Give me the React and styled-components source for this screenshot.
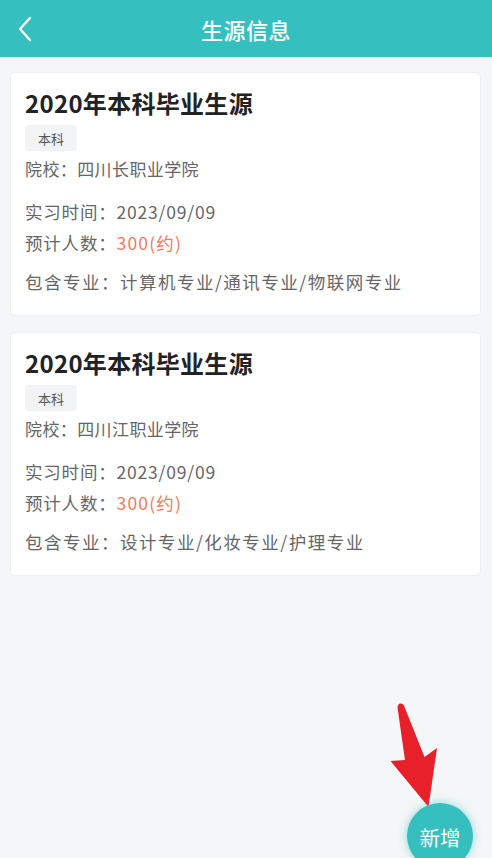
import React from "react";
import styled, { createGlobalStyle } from "styled-components";

const Global = createGlobalStyle`
  html, body { margin: 0; padding: 0; }
  body {
    background: #f4f6f8;
    font-family: "Noto Sans CJK SC", "Noto Sans", sans-serif;
    overflow: hidden;
  }
  * { box-sizing: border-box; }
`;

const Page = styled.div`
  position: relative;
  width: 492px;
  height: 858px;
  overflow: hidden;
  background: #f4f6f8;
`;

const Header = styled.header`
  height: 57px;
  background: #35bfbe;
  display: flex;
  align-items: center;
  justify-content: center;
  position: relative;
`;

const BackButton = styled.button`
  position: absolute;
  left: 10px;
  top: 0;
  height: 57px;
  width: 30px;
  border: 0;
  padding: 0;
  background: transparent;
  display: flex;
  align-items: center;
  justify-content: center;
`;

const Title = styled.h1`
  margin: 0;
  color: #fff;
  font-size: 22px;
  font-weight: 500;
  letter-spacing: 0.5px;
`;

const List = styled.main`
  display: flex;
  flex-direction: column;
  gap: 16px;
  padding: 15px 11px 0 10px;
`;

const Card = styled.section`
  background: #fff;
  border-radius: 5px;
  border: 1px solid #eceef0;
  padding: 14px 14px 20px 14px;
  display: flex;
  flex-direction: column;
  align-items: flex-start;
`;

const CardTitle = styled.h2`
  margin: 0;
  font-size: 24px;
  line-height: 32px;
  font-weight: 700;
  letter-spacing: 0.3px;
  color: #222;
`;

const Tag = styled.span`
  margin-top: 6px;
  height: 26px;
  padding: 0 13px;
  display: inline-flex;
  align-items: center;
  background: #f2f3f5;
  border-radius: 4px;
  font-size: 13px;
  color: #555;
`;

const School = styled.p`
  margin: 5px 0 0 0;
  font-size: 17px;
  letter-spacing: 0.4px;
  line-height: 26px;
  color: #666;
`;

const Line = styled.p`
  margin: ${(p) => p.$gap}px 0 0 0;
  font-size: 17.5px;
  letter-spacing: ${(p) => (p.$wide ? 1.5 : 0.8)}px;
  line-height: 26px;
  color: #666;
`;

const Highlight = styled.span`
  color: #f47b5a;
  letter-spacing: 1.2px;
`;

const Fab = styled.button`
  position: absolute;
  left: 407px;
  bottom: -11px;
  width: 66px;
  height: 66px;
  border-radius: 50%;
  border: 0;
  background: #35bfbe;
  box-shadow: 0 0 8px rgba(53, 191, 190, 0.55);
  color: #fff;
  font-family: "Noto Sans CJK SC", sans-serif;
  font-size: 20.5px;
  padding: 2px 0 0 0;
  display: flex;
  align-items: center;
  justify-content: center;
`;

const Pointer = styled.svg`
  position: absolute;
  left: 385px;
  top: 700px;
  width: 60px;
  height: 112px;
  overflow: visible;
`;

const data = [
  { school: "四川长职业学院", majors: "计算机专业/通讯专业/物联网专业" },
  { school: "四川江职业学院", majors: "设计专业/化妆专业/护理专业" },
];

export default function App() {
  return (
    <Page>
      <Global />
      <Header>
        <BackButton aria-label="返回">
          <svg width="14" height="26" viewBox="0 0 14 26">
            <path d="M12 2 L2 13 L12 24" fill="none" stroke="#fff" strokeWidth="2.4" strokeLinecap="round" strokeLinejoin="round" />
          </svg>
        </BackButton>
        <Title>生源信息</Title>
      </Header>
      <List>
        {data.map((d, i) => (
          <Card key={i}>
            <CardTitle>2020年本科毕业生源</CardTitle>
            <Tag>本科</Tag>
            <School>院校：{d.school}</School>
            <Line $gap={17}>实习时间：2023/09/09</Line>
            <Line $gap={5}>
              预计人数：<Highlight>300(约)</Highlight>
            </Line>
            <Line $gap={13} $wide>包含专业：{d.majors}</Line>
          </Card>
        ))}
      </List>
      <Pointer viewBox="385 700 60 112">
        <path
          d="M397.5 707.5 Q398 703 401 703.5 Q404 704 404.5 707 L424.5 757 L437 748 L428.5 807 L390.5 761 L405 760 Z"
          fill="#e8202a"
        />
      </Pointer>
      <Fab>新增</Fab>
    </Page>
  );
}
